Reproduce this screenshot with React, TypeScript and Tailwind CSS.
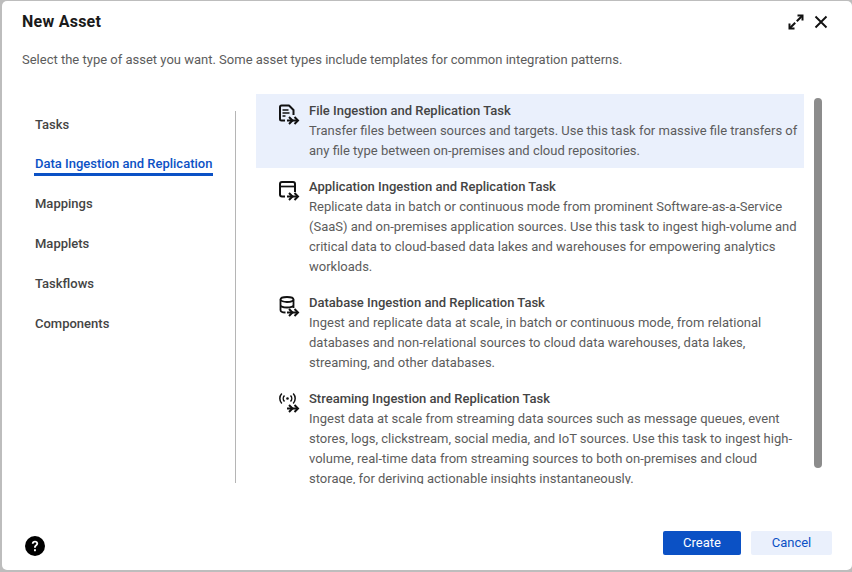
import React from "react";

const navItems = ["Tasks", "Data Ingestion and Replication", "Mappings", "Mapplets", "Taskflows", "Components"];

function Arrow() {
  return (
    <g fill="none" stroke="#111" strokeWidth="2">
      <path d="M9 18.500h11" />
      <path d="M11 15l3.500 3.500-3.500 3.500" />
      <path d="M16.500 15l3.500 3.500-3.500 3.500" />
    </g>
  );
}

function FileIcon() {
  return (
    <svg width="22" height="24" viewBox="0 0 22 24">
      <path d="M7 18.500H3.500A1.500 1.500 0 0 1 2 17V5A1.500 1.500 0 0 1 3.500 3.500H11L15.500 8V13" fill="none" stroke="#111" strokeWidth="2" strokeLinejoin="round" />
      <path d="M4.500 8h6M4.500 11h7M4.500 14h3" stroke="#111" strokeWidth="1.600" />
      <Arrow />
    </svg>
  );
}

function AppIcon() {
  return (
    <svg width="22" height="24" viewBox="0 0 22 24">
      <path d="M7 18.500H4A2 2 0 0 1 2 16.500V6A2 2 0 0 1 4 4H15A2 2 0 0 1 17 6V14" fill="none" stroke="#111" strokeWidth="2" />
      <path d="M2 8.500h15" stroke="#111" strokeWidth="1.700" />
      <Arrow />
    </svg>
  );
}

function DbIcon() {
  return (
    <svg width="22" height="24" viewBox="0 0 22 24">
      <ellipse cx="9" cy="5.500" rx="6.500" ry="2.500" fill="none" stroke="#111" strokeWidth="1.800" />
      <path d="M2.500 5.500V16c0 1.500 2.500 2.500 5 2.500M15.500 5.500V14M2.500 11c0 1.400 3 2.500 6.500 2.500s6.500-1.100 6.500-2.500" fill="none" stroke="#111" strokeWidth="1.800" />
      <Arrow />
    </svg>
  );
}

function StreamIcon() {
  return (
    <svg width="22" height="24" viewBox="0 0 22 24">
      <circle cx="9.500" cy="8.500" r="1.300" fill="#111" />
      <path d="M6.500 5.500a4.300 4.300 0 0 0 0 6M12.500 5.500a4.300 4.300 0 0 1 0 6M3.800 3.500a7.300 7.300 0 0 0 0 10M15.200 3.500a7.300 7.300 0 0 1 0 10" fill="none" stroke="#111" strokeWidth="1.500" />
      <Arrow />
    </svg>
  );
}

const tasks = [
  {
    icon: <FileIcon />,
    title: "File Ingestion and Replication Task",
    lines: [
      "Transfer files between sources and targets. Use this task for massive file transfers of",
      "any file type between on-premises and cloud repositories.",
    ],
  },
  {
    icon: <AppIcon />,
    title: "Application Ingestion and Replication Task",
    lines: [
      "Replicate data in batch or continuous mode from prominent Software-as-a-Service",
      "(SaaS) and on-premises application sources. Use this task to ingest high-volume and",
      "critical data to cloud-based data lakes and warehouses for empowering analytics",
      "workloads.",
    ],
  },
  {
    icon: <DbIcon />,
    title: "Database Ingestion and Replication Task",
    lines: [
      "Ingest and replicate data at scale, in batch or continuous mode, from relational",
      "databases and non-relational sources to cloud data warehouses, data lakes,",
      "streaming, and other databases.",
    ],
  },
  {
    icon: <StreamIcon />,
    title: "Streaming Ingestion and Replication Task",
    lines: [
      "Ingest data at scale from streaming data sources such as message queues, event",
      "stores, logs, clickstream, social media, and IoT sources. Use this task to ingest high-",
      "volume, real-time data from streaming sources to both on-premises and cloud",
      "storage, for deriving actionable insights instantaneously.",
    ],
  },
];

export default function App() {
  return (
    <div className="w-[852px] h-[572px] bg-[#bdbdbd] pl-[2px] pt-[1px] pb-[2px] overflow-hidden font-['Roboto',sans-serif]">
      <div className="h-full bg-white rounded-[5px] flex flex-col">
        {/* Header */}
        <div className="flex items-center justify-between h-[40px] pl-[20px] pr-[23px] pt-[1px]">
          <h1 className="text-[16px] font-bold tracking-[0.25px] text-[#1a1a1a]">New Asset</h1>
          <div className="flex items-center gap-[9px]">
            <svg width="16" height="16" viewBox="0 0 16 16" fill="none" stroke="#111" strokeWidth="2">
              <path d="M9.500 1.500H14.500V6.500" />
              <path d="M14 2L8.800 7.200" />
              <path d="M1.500 9.500V14.500H6.500" />
              <path d="M2 14L7.200 8.800" />
            </svg>
            <svg width="16" height="16" viewBox="0 0 16 16" fill="none" stroke="#111" strokeWidth="1.900">
              <path d="M2.500 2.500l11 11M13.500 2.500l-11 11" />
            </svg>
          </div>
        </div>

        <p className="pl-[20px] mt-[9px] text-[13px] leading-[20px] text-[#5c5c5c]">
          Select the type of asset you want. Some asset types include templates for common integration patterns.
        </p>

        {/* Body */}
        <div className="flex mt-[24px] h-[390px] relative">
          <div className="w-[234px] h-[372px] mt-[17px] border-r border-[#b5b5b5] shrink-0">
            <nav className="flex flex-col pl-[32px] -mt-[6px]">
              {navItems.map((item, i) => (
                <div key={item} className={`flex items-center ${i === 0 ? "h-[39px] pt-[1px]" : "h-[40px]"}`}>
                  {item === "Data Ingestion and Replication" ? (
                    <span className="text-[13px] leading-[19px] font-medium text-[#0b51c5] border-b-[3px] border-[#0b51c5] px-[1px] mt-[2px]">
                      {item}
                    </span>
                  ) : (
                    <span className="text-[13px] leading-[20px] font-medium text-[#444] pl-[1px]">{item}</span>
                  )}
                </div>
              ))}
            </nav>
          </div>

          <div className="ml-[20px] w-[548px] h-[390px] overflow-hidden flex flex-col gap-[2px] shrink-0">
            {tasks.map((task, i) => (
              <div key={task.title} className={`flex py-[7px] pl-[22px] ${i === 0 ? "bg-[#eaf0fc]" : ""}`}>
                <div className="w-[31px] pt-[1px] shrink-0">{task.icon}</div>
                <div className="text-[13px] leading-[20px]">
                  <div className="font-medium text-[#444] whitespace-nowrap">{task.title}</div>
                  {task.lines.map((line) => (
                    <div key={line} className="text-[#5c5c5c] whitespace-nowrap">{line}</div>
                  ))}
                </div>
              </div>
            ))}
          </div>

          {/* Scrollbar thumb */}
          <div className="absolute left-[812px] top-[4px] w-[8px] h-[370px] rounded-[4px] bg-[#8c8c8c]" />
        </div>

        {/* Footer */}
        <div className="flex-1 flex items-center justify-between pl-[23px] pr-[20px] pt-[32px]">
          <svg className="mt-[6px]" width="20" height="20" viewBox="0 0 20 20">
            <circle cx="10" cy="10" r="10" fill="#000" />
            <path d="M6.800 7.800c0-1.900 1.400-3 3.200-3s3.200 1.100 3.200 2.800c0 2.300-2.400 2.300-2.400 4.200H9c0-2.800 2.300-2.800 2.300-4.200 0-.7-.5-1.200-1.300-1.200s-1.300.5-1.400 1.400z" fill="#fff" />
            <rect x="9" y="13.200" width="1.900" height="2" fill="#fff" />
          </svg>
          <div className="flex gap-[10px]">
            <button className="w-[78px] h-[24px] rounded-[2px] bg-[#0b51c5] text-white text-[13px]">Create</button>
            <button className="w-[81px] h-[24px] rounded-[2px] bg-[#eaf0fc] text-[#0b51c5] text-[13px]">Cancel</button>
          </div>
        </div>
      </div>
    </div>
  );
}
